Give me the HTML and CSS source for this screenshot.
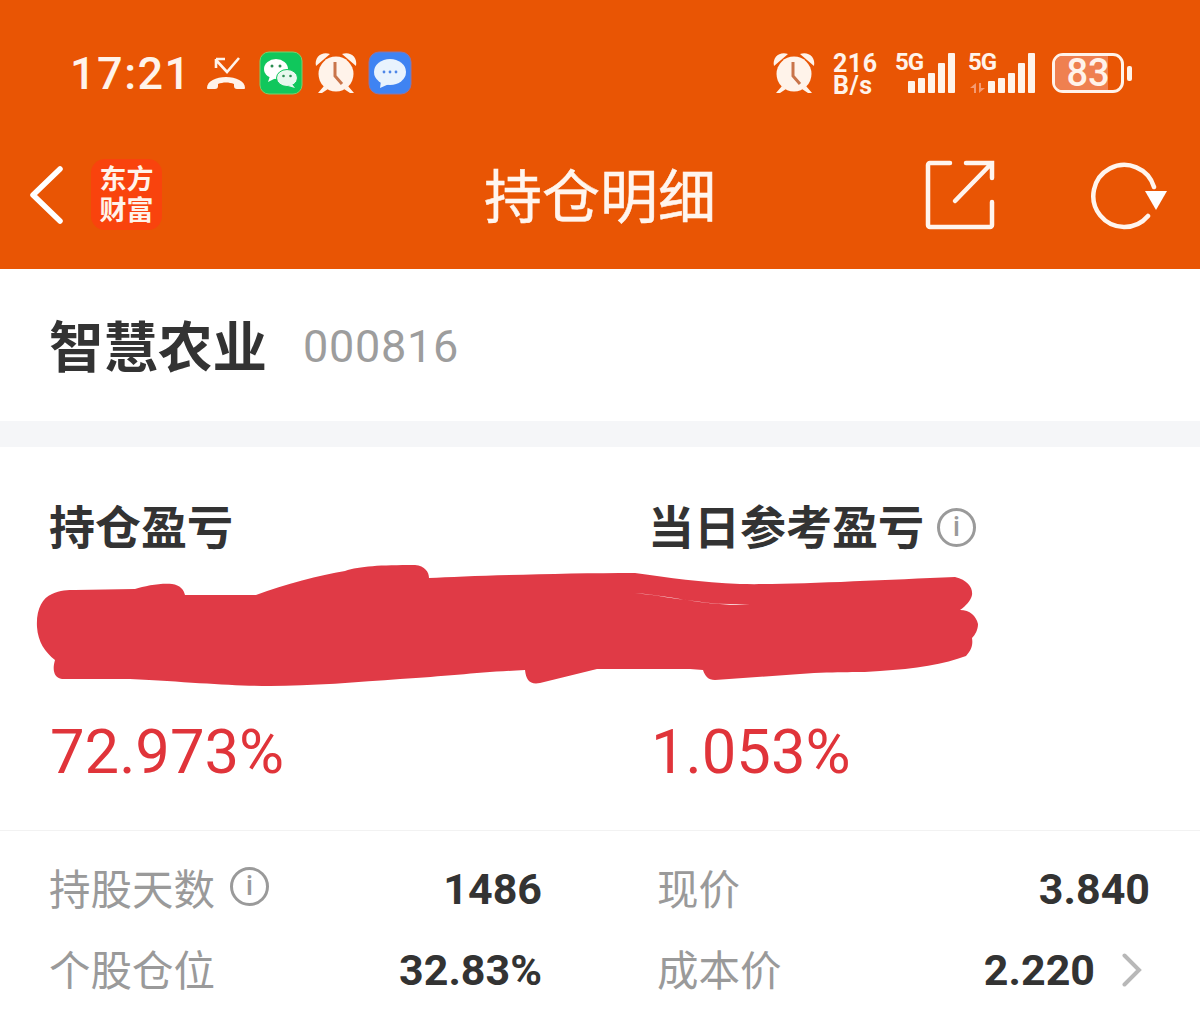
FILE: index.html
```html
<!DOCTYPE html>
<html lang="zh">
<head>
  <meta charset="UTF-8">
  <title>持仓明细</title>
  <link rel="stylesheet" href="styles.css">
</head>
<body>

  <!-- orange header -->
  <div class="top">
    <div class="status">
      <div class="status-left">
        <span class="time">17:21</span>
        <svg class="ic-missed" viewBox="0 0 40 34"><path d="M10 4l11 12L33 2M10 3v9M10 3h9" fill="none" stroke="#fff3ea" stroke-width="2.600"/><path d="M1 32c0-7 9-11 19-11s19 4 19 11c0 1-1 1-2 1h-6c-2 0-3-1-3-3v-2c-5-2-11-2-16 0v2c0 2-1 3-3 3H3c-1 0-2 0-2-1z" fill="#fff3ea"/></svg>
        <svg class="ic-app" viewBox="0 0 44 44"><rect x="1" y="1" width="42" height="42" rx="9" fill="#10c75c" stroke="#7bd06a"/><ellipse cx="17" cy="18" rx="12" ry="10" fill="#fff"/><path d="M11 25l-2 6 8-4z" fill="#fff"/><ellipse cx="28" cy="27" rx="10.500" ry="8.500" fill="#e8f8ee" stroke="#10c75c"/><path d="M33 33l3 4-7-2z" fill="#e8f8ee"/><circle cx="13" cy="15" r="1.500" fill="#2a8c50"/><circle cx="21" cy="15" r="1.500" fill="#2a8c50"/><circle cx="24.500" cy="25" r="1.300" fill="#2a8c50"/><circle cx="31.500" cy="25" r="1.300" fill="#2a8c50"/></svg>
        <svg class="ic-clock" viewBox="0 0 44 44"><use href="#alarm"/></svg>
        <svg class="ic-app" viewBox="0 0 44 44"><rect x="1" y="1" width="42" height="42" rx="10" fill="#3f83f2" stroke="#8c76a8"/><ellipse cx="22" cy="21" rx="16" ry="13" fill="#e9f3fd"/><path d="M13 30l-1 7 9-4z" fill="#e9f3fd"/><circle cx="16" cy="21" r="1.400" fill="#4d86e8"/><circle cx="22" cy="21" r="1.400" fill="#4d86e8"/><circle cx="28" cy="21" r="1.400" fill="#4d86e8"/></svg>
      </div>
      <div class="status-right">
        <svg class="ic-clock ic-clock-r" viewBox="0 0 44 44"><use href="#alarm"/></svg>
        <div class="speed"><span>216</span><span>B/s</span></div>
        <div class="net">
          <span class="net-label">5G</span>
          <div class="bars"><i class="b1"></i><i class="b2"></i><i class="b3"></i><i class="b4"></i><i class="b5"></i></div>
        </div>
        <div class="net net-2">
          <span class="net-label">5G</span>
          <svg class="ic-updown" viewBox="0 0 15 10"><path d="M6 0v10H4V5H0zM9 10V0h2v5h4z" fill="#f49a72"/></svg>
          <div class="bars"><i class="b1"></i><i class="b2"></i><i class="b3"></i><i class="b4"></i><i class="b5"></i></div>
        </div>
        <div class="battery"><div class="battery-fill"></div><span>83</span></div>
        <div class="battery-tip"></div>
      </div>
    </div>

    <div class="nav">
      <div class="nav-left">
        <svg class="ic-back" viewBox="0 0 36 58"><path d="M32 3L5 29l27 26" fill="none" stroke="#fff" stroke-width="5.500" stroke-linecap="round" stroke-linejoin="round"/></svg>
        <div class="logo">东方<br>财富</div>
      </div>
      <div class="nav-title">持仓明细</div>
      <div class="nav-right">
        <svg class="ic-share" viewBox="0 0 70 70"><path d="M25 3H5a2 2 0 0 0-2 2v60a2 2 0 0 0 2 2h60a2 2 0 0 0 2-2V42" fill="none" stroke="#fff5ee" stroke-width="4.500" stroke-linecap="round"/><path d="M41 3h26v15M65 5L30 41" fill="none" stroke="#fff5ee" stroke-width="4.500" stroke-linecap="round"/></svg>
        <svg class="ic-refresh" viewBox="0 0 78 70"><path d="M59 56A31 31 0 1 1 65 27" fill="none" stroke="#fff5ee" stroke-width="4.500" stroke-linecap="round"/><path d="M56 31h22L67 50z" fill="#fff"/></svg>
      </div>
    </div>
  </div>

  <div class="stock">
    <span class="stock-name">智慧农业</span>
    <span class="stock-code">000816</span>
  </div>
  <div class="gap"></div>

  <!-- profit -->
  <div class="profit">
    <div class="profit-row">
      <div class="profit-col">
        <div class="profit-label">持仓盈亏</div>
        <div class="pct">72.973%</div>
      </div>
      <div class="profit-col">
        <div class="profit-label profit-label-2">当日参考盈亏 <span class="info info-top">i</span></div>
        <div class="pct">1.053%</div>
      </div>
    </div>
    <!-- scribble over the amounts -->
    <svg class="scribble" viewBox="0 0 1200 140">
      <path fill="#e03a46" d="M37 65C36 48 42 36 52 32C60 28 68 28 75 28L135 27C145 24 160 21 172 22C180 23 184 28 185 33L256 33C285 22 320 13 345 9C360 4 380 3 415 3C425 4 429 10 429 16C470 14 560 11 635 11C670 16 700 20 740 22C790 23 880 18 955 15C968 18 973 26 972 33C971 38 966 44 960 48C970 48 976 54 978 62C978 68 975 73 972 76C973 82 972 88 966 94C945 102 915 107 880 109C860 111 840 109 800 112L715 118C708 118 705 114 703 108L690 107L597 107L540 121C530 123 526 118 525 108C480 110 450 114 400 117C360 120 310 124 270 124C230 124 190 120 130 117L62 117C54 116 52 108 55 98C45 90 38 80 37 65Z"/>
      <path fill="#fff" d="M635 31C670 34 700 42 730 42L750 43C710 44 680 36 635 31Z"/>
    </svg>
  </div>

  <!-- details -->
  <div class="details">
    <div class="cell">
      <span class="cell-label">持股天数 <span class="info">i</span></span>
      <span class="cell-value">1486</span>
    </div>
    <div class="cell">
      <span class="cell-label">现价</span>
      <span class="cell-value">3.840</span>
    </div>
    <div class="cell">
      <span class="cell-label">个股仓位</span>
      <span class="cell-value">32.83%</span>
    </div>
    <div class="cell">
      <span class="cell-label">成本价</span>
      <span class="cell-value">2.220
        <svg class="ic-more" viewBox="0 0 20 34"><path d="M2.500 2.500L17 17 2.500 31.500" fill="none" stroke="#b8b8b8" stroke-width="4" stroke-linecap="round"/></svg>
      </span>
    </div>
  </div>

  <svg class="defs" width="0" height="0">
    <symbol id="alarm" viewBox="0 0 44 44">
      <circle cx="22" cy="23" r="17.500" fill="#fff3ea"/>
      <path d="M2 15C0 6 8 0 16 3zM42 15c2-9-6-15-14-12zM10 35l-6 7h4l6-4zM34 35l6 7h-4l-6-4z" fill="#fff3ea"/>
      <path d="M21 11v14l7 8" fill="none" stroke="#c9744a" stroke-width="3"/>
    </symbol>
  </svg>

</body>
</html>
```

FILE: styles.css
```css
* { box-sizing:border-box; }
body { margin:0; width:1200px; height:1012px; overflow:hidden; background:#fff;
  font-family:"Noto Sans CJK SC", "Liberation Sans", sans-serif; color:#333; }

.top { background:#e95504; height:269px; color:#fff; }
.status { height:135px; padding:44px 68px 0 70px; display:flex; justify-content:space-between; align-items:flex-start; }
.status-left, .status-right { display:flex; align-items:center; height:58px; }
.time { font-family:Roboto, sans-serif; font-weight:500; font-size:45px; letter-spacing:1.500px; color:#fff3ea; width:136px; }
.ic-missed { width:40px; height:34px; margin-right:13px; }
.ic-app { width:44px; height:44px; }
.ic-clock { width:44px; height:44px; margin:0 10px 0 11px; }
.ic-clock-r { margin:0 17px 0 0; }
.speed { display:flex; flex-direction:column; font:bold 25px/22px Roboto, sans-serif; letter-spacing:.5px; color:#fff3ea; width:62px; margin-top:4px; }
.net { position:relative; width:60px; height:40px; margin-right:13px; }
.net-2 { width:67px; margin-right:17px; }
.net-label { position:absolute; left:0; top:-5px; font:bold 24px/28px Roboto, sans-serif; color:#fff3ea; letter-spacing:-1px; }
.ic-updown { position:absolute; left:2px; bottom:0; width:15px; height:10px; }
.bars { position:absolute; right:0; bottom:0; display:flex; align-items:flex-end; gap:3px; }
.bars i { display:block; width:7px; background:#fff3ea; border-radius:1px; }
.b1 { height:12px; } .b2 { height:15px; } .b3 { height:20px; } .b4 { height:30px; } .b5 { height:40px; }
.battery { position:relative; width:72px; height:40px; border:3px solid #fff3ea; border-radius:11px; display:flex; align-items:center; justify-content:center; }
.battery span { position:relative; font:500 38px/34px Roboto, sans-serif; color:#fff3ea; }
.battery-fill { position:absolute; left:0; top:0; bottom:0; width:53px; background:#ef8050; border-radius:7px 0 0 7px; }
.battery-tip { width:5px; height:15px; background:#fff3ea; border-radius:2px; margin-left:3px; }

.nav { height:134px; display:flex; align-items:center; justify-content:space-between; padding:0 33px 15px 28px; position:relative; }
.nav-left { display:flex; align-items:center; }
.ic-back { width:36px; height:58px; margin-right:27px; }
.logo { width:71px; height:71px; background:#f9430d; border-radius:14px; color:#fff3ea; font-size:27px; line-height:31px; font-weight:bold; text-align:center; padding-top:3px; }
.nav-title { position:absolute; left:0; right:0; top:23px; text-align:center; font-size:58px; line-height:70px; color:#fff5ee; -webkit-text-stroke:.5px #fff5ee; pointer-events:none; }
.nav-right { display:flex; align-items:center; gap:94px; }
.ic-share { width:70px; height:70px; }
.ic-refresh { width:78px; height:70px; }

.stock { height:152px; padding:0 50px 0 49px; display:flex; align-items:center; }
.stock-name { font-size:54.500px; font-weight:bold; color:#333; width:254px; padding-bottom:3px; }
.stock-code { font-family:Roboto, sans-serif; font-size:45px; color:#9d9d9d; letter-spacing:.7px; padding-top:2px; }
.gap { height:26px; background:#f5f6f8; }

.profit { position:relative; height:384px; padding:47px 50px 0; border-bottom:1px solid #f2f2f2; }
.profit-row { display:flex; }
.profit-col { flex:none; width:601px; }
.profit-label { font-size:46px; line-height:60px; font-weight:bold; color:#333; display:flex; align-items:center; gap:13px; margin-left:-1px; }
.profit-label-2 { margin-left:-3px; }
.info-top { margin-top:6px; }
.pct { margin-top:163px; font-family:Roboto, sans-serif; font-size:61.500px; line-height:70px; color:#e0343a; }
.scribble { position:absolute; left:0; top:115px; width:1200px; height:140px; }
.defs { position:absolute; }

.details { display:grid; grid-template-columns:492px 492px; column-gap:116px; padding:17px 50px 0; }
.cell { display:flex; justify-content:space-between; align-items:center; height:81px; }
.cell-label { font-size:41.500px; color:#9a9a9a; display:flex; align-items:center; gap:15px; padding-bottom:4px; margin-left:-1px; }
.cell-value { font-family:Roboto, sans-serif; font-size:43px; font-weight:700; color:#333; display:flex; align-items:center; }
.info { display:inline-flex; align-items:center; justify-content:center; flex:none; width:39px; height:39px; border:3px solid #9a9a9a; border-radius:50%; font:500 27px/1 Roboto, sans-serif; color:#9a9a9a; }
.ic-more { width:20px; height:34px; margin-left:27px; margin-right:8px; }
```
